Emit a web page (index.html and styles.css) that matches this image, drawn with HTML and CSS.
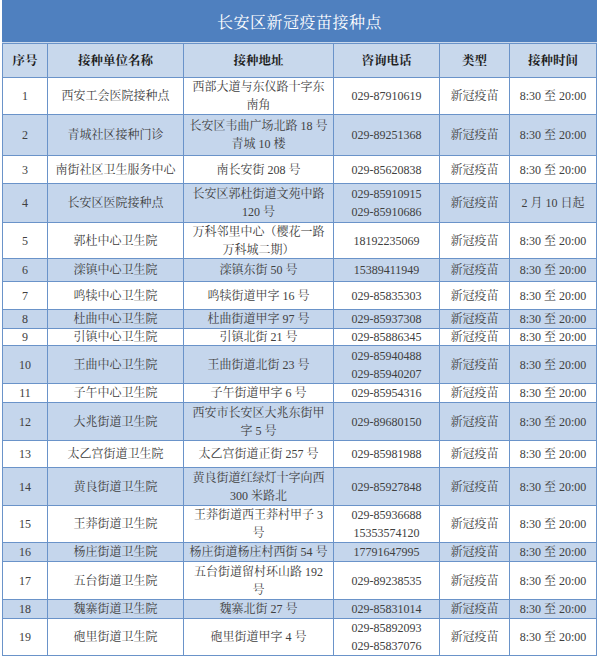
FILE: index.html
```html
<!DOCTYPE html>
<html lang="zh-CN">
<head>
<meta charset="utf-8">
<title>长安区新冠疫苗接种点</title>
<link rel="stylesheet" href="styles.css">
</head>
<body>
<div class="sheet">
  <div class="title">长安区新冠疫苗接种点</div>
  <div class="row head"><div>序号</div><div>接种单位名称</div><div>接种地址</div><div>咨询电话</div><div>类型</div><div>接种时间</div></div>
  <div class="row"><div>1</div><div>西安工会医院接种点</div><div>西部大道与东仪路十字东<br>南角</div><div>029-87910619</div><div>新冠疫苗</div><div>8:30 至 20:00</div></div>
  <div class="row alt"><div>2</div><div>青城社区接种门诊</div><div>长安区韦曲广场北路 18 号<br>青城 10 楼</div><div>029-89251368</div><div>新冠疫苗</div><div>8:30 至 20:00</div></div>
  <div class="row"><div>3</div><div>南街社区卫生服务中心</div><div>南长安街 208 号</div><div>029-85620838</div><div>新冠疫苗</div><div>8:30 至 20:00</div></div>
  <div class="row alt"><div>4</div><div>长安区医院接种点</div><div>长安区郭杜街道文苑中路<br>120 号</div><div>029-85910915<br>029-85910686</div><div>新冠疫苗</div><div>2 月 10 日起</div></div>
  <div class="row"><div>5</div><div>郭杜中心卫生院</div><div>万科邻里中心（樱花一路<br>万科城二期）</div><div>18192235069</div><div>新冠疫苗</div><div>8:30 至 20:00</div></div>
  <div class="row alt"><div>6</div><div>滦镇中心卫生院</div><div>滦镇东街 50 号</div><div>15389411949</div><div>新冠疫苗</div><div>8:30 至 20:00</div></div>
  <div class="row"><div>7</div><div>鸣犊中心卫生院</div><div>鸣犊街道甲字 16 号</div><div>029-85835303</div><div>新冠疫苗</div><div>8:30 至 20:00</div></div>
  <div class="row alt"><div>8</div><div>杜曲中心卫生院</div><div>杜曲街道甲字 97 号</div><div>029-85937308</div><div>新冠疫苗</div><div>8:30 至 20:00</div></div>
  <div class="row"><div>9</div><div>引镇中心卫生院</div><div>引镇北街 21 号</div><div>029-85886345</div><div>新冠疫苗</div><div>8:30 至 20:00</div></div>
  <div class="row alt"><div>10</div><div>王曲中心卫生院</div><div>王曲街道北街 23 号</div><div>029-85940488<br>029-85940207</div><div>新冠疫苗</div><div>8:30 至 20:00</div></div>
  <div class="row"><div>11</div><div>子午中心卫生院</div><div>子午街道甲字 6 号</div><div>029-85954316</div><div>新冠疫苗</div><div>8:30 至 20:00</div></div>
  <div class="row alt"><div>12</div><div>大兆街道卫生院</div><div>西安市长安区大兆东街甲<br>字 5 号</div><div>029-89680150</div><div>新冠疫苗</div><div>8:30 至 20:00</div></div>
  <div class="row"><div>13</div><div>太乙宫街道卫生院</div><div>太乙宫街道正街 257 号</div><div>029-85981988</div><div>新冠疫苗</div><div>8:30 至 20:00</div></div>
  <div class="row alt"><div>14</div><div>黄良街道卫生院</div><div>黄良街道红绿灯十字向西<br>300 米路北</div><div>029-85927848</div><div>新冠疫苗</div><div>8:30 至 20:00</div></div>
  <div class="row"><div>15</div><div>王莽街道卫生院</div><div>王莽街道西王莽村甲子 3<br>号</div><div>029-85936688<br>15353574120</div><div>新冠疫苗</div><div>8:30 至 20:00</div></div>
  <div class="row alt"><div>16</div><div>杨庄街道卫生院</div><div>杨庄街道杨庄村西街 54 号</div><div>17791647995</div><div>新冠疫苗</div><div>8:30 至 20:00</div></div>
  <div class="row"><div>17</div><div>五台街道卫生院</div><div>五台街道留村环山路 192<br>号</div><div>029-89238535</div><div>新冠疫苗</div><div>8:30 至 20:00</div></div>
  <div class="row alt"><div>18</div><div>魏寨街道卫生院</div><div>魏寨北街 27 号</div><div>029-85831014</div><div>新冠疫苗</div><div>8:30 至 20:00</div></div>
  <div class="row"><div>19</div><div>砲里街道卫生院</div><div>砲里街道甲字 4 号</div><div>029-85892093<br>029-85837076</div><div>新冠疫苗</div><div>8:30 至 20:00</div></div>
</div>
</body>
</html>
```
FILE: styles.css
```css
html, body {
  margin: 0;
  padding: 0;
  background: #ffffff;
}

body {
  font-family: "Liberation Serif", "Noto Serif CJK SC", "Noto Sans CJK SC", serif;
  font-size: 12px;
  color: #404040;
}

.sheet {
  margin-left: 2px;
  width: 595px;
  box-sizing: border-box;
  display: grid;
  grid-template-columns: 44px 135px 149px 105px 69px 86px;
  grid-template-rows: 43px 33px 36px 40px 27px 38px 35px 22px 27px 18px 16px 37px 18px 37px 26px 37px 36px 18px 37px 18px 36px;
  gap: 1px;
  padding: 0 1px 1px 1px;
  background: #6a93c9;
}

.title {
  grid-column: 1 / -1;
  margin: 0 -1px;
  background: #4f80bf;
  color: #ffffff;
  font-size: 16px;
  letter-spacing: 0.5px;
  display: flex;
  align-items: center;
  justify-content: center;
  box-shadow: inset 0 -1px 0 #c9d8ec;
}

.row {
  display: contents;
}

.row > div {
  background: #ffffff;
  display: flex;
  align-items: center;
  justify-content: center;
  text-align: center;
  line-height: 18px;
  white-space: nowrap;
  overflow: visible;
}

.row.alt > div {
  background: #c5d6ec;
}

.row.head > div {
  background: #c8d8ec;
  color: #1e1e1e;
  font-weight: 700;
  font-size: 12.5px;
}
```
